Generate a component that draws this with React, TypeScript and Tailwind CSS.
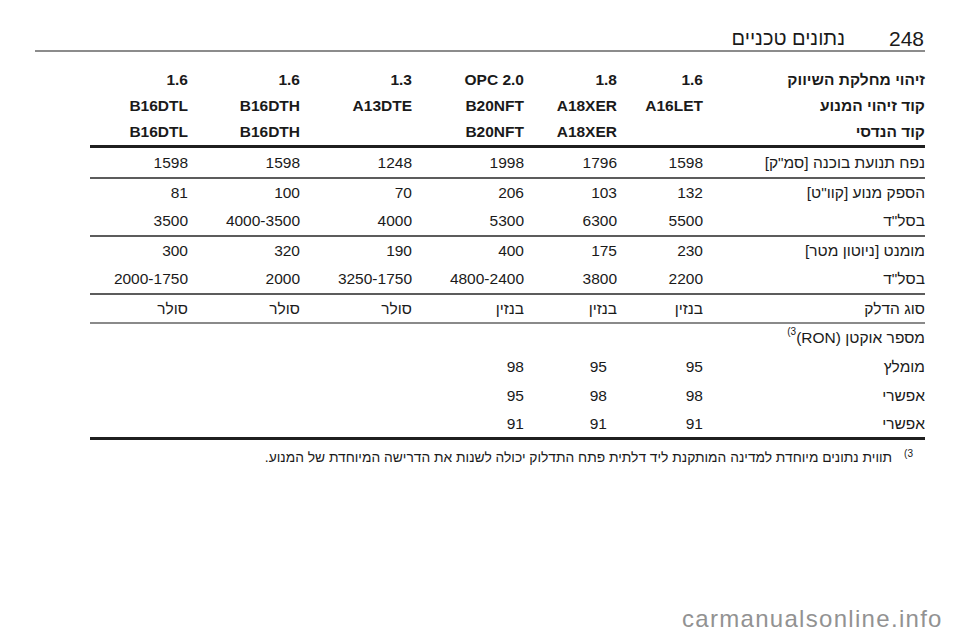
const GRID = "grid grid-cols-[222px_86px_93px_112px_112px_112px_98px] items-center";

type RowProps = {
  label: React.ReactNode;
  values: string[];
  h: string;
  bold?: boolean;
  shift?: boolean;
};

function Row({ label, values, h, bold, shift }: RowProps) {
  return (
    <div className={`${GRID} ${h} ${bold ? "font-bold" : ""}`}>
      <div className="text-right whitespace-nowrap">{label}</div>
      {values.map((v, i) => (
        <div key={i} dir="ltr" className={`text-right whitespace-nowrap ${shift && i === 1 ? "pr-[10px]" : ""}`}>
          {v}
        </div>
      ))}
    </div>
  );
}

function Thick() {
  return <div className="h-[3px] bg-[#1f1f1f]" />;
}

function Thin() {
  return <div className="h-[2px] bg-[#5c5c5c]" />;
}

export default function App() {
  return (
    <div
      dir="rtl"
      className="relative w-[960px] h-[642px] overflow-hidden bg-white text-[#1a1a1a] font-['Liberation_Sans',Arial,sans-serif]"
    >
      {/* page header */}
      <div className="mt-[26px] mr-[36px] ml-[35px] h-[24px] flex items-center gap-[44px] text-[21px] leading-none">
        <span>248</span>
        <span className="text-[20px]">נתונים טכניים</span>
      </div>
      <div className="mr-[35px] ml-[35px] h-[2px] bg-[#8c8c8c]" />

      {/* engine data table */}
      <div className="mt-[15px] mr-[35px] ml-[90px] text-[15.5px] leading-none">
        <Row bold h="h-[26px]" label="זיהוי מחלקת השיווק" values={["1.6", "1.8", "OPC 2.0", "1.3", "1.6", "1.6"]} />
        <Row bold h="h-[26px]" label="קוד זיהוי המנוע" values={["A16LET", "A18XER", "B20NFT", "A13DTE", "B16DTH", "B16DTL"]} />
        <Row bold h="h-[26px]" label="קוד הנדסי" values={["", "A18XER", "B20NFT", "", "B16DTH", "B16DTL"]} />
        <Thick />
        <Row h="h-[29px]" label='נפח תנועת בוכנה [סמ"ק]' values={["1598", "1796", "1998", "1248", "1598", "1598"]} />
        <Thin />
        <Row h="h-[28px]" label='הספק מנוע [קוו"ט]' values={["132", "103", "206", "70", "100", "81"]} />
        <Row h="h-[28px]" label='בסל"ד' values={["5500", "6300", "5300", "4000", "4000-3500", "3500"]} />
        <Thin />
        <Row h="h-[28px]" label="מומנט [ניוטון מטר]" values={["230", "175", "400", "190", "320", "300"]} />
        <Row h="h-[28px]" label='בסל"ד' values={["2200", "3800", "4800-2400", "3250-1750", "2000", "2000-1750"]} />
        <Thin />
        <Row h="h-[27px]" label="סוג הדלק" values={["בנזין", "בנזין", "בנזין", "סולר", "סולר", "סולר"]} />
        <div className="h-[2px] bg-[#8a8a8a]" />
        <Row
          h="h-[28px]"
          label={
            <span>
              מספר אוקטן (RON)
              <span dir="ltr" className="text-[10px] align-top relative top-[-3px]">(3</span>
            </span>
          }
          values={[]}
        />
        <Row shift h="h-[29px]" label="מומלץ" values={["95", "95", "98"]} />
        <Row shift h="h-[29px]" label="אפשרי" values={["98", "98", "95"]} />
        <Row shift h="h-[27px]" label="אפשרי" values={["91", "91", "91"]} />
        <Thick />
      </div>

      {/* footnote */}
      <div className="mt-[8px] mr-[47px] h-[20px] flex items-center gap-[12px] text-[13.8px] leading-none">
        <span dir="ltr" className="text-[10px] relative top-[-4px]">(3</span>
        <span>תווית נתונים מיוחדת למדינה המותקנת ליד דלתית פתח התדלוק יכולה לשנות את הדרישה המיוחדת של המנוע.</span>
      </div>

      {/* watermark */}
      <div dir="ltr" className="absolute left-[682px] top-[607px] text-[24px] tracking-[1.3px] leading-none text-[#929292]">
        carmanualsonline.info
      </div>
    </div>
  );
}
